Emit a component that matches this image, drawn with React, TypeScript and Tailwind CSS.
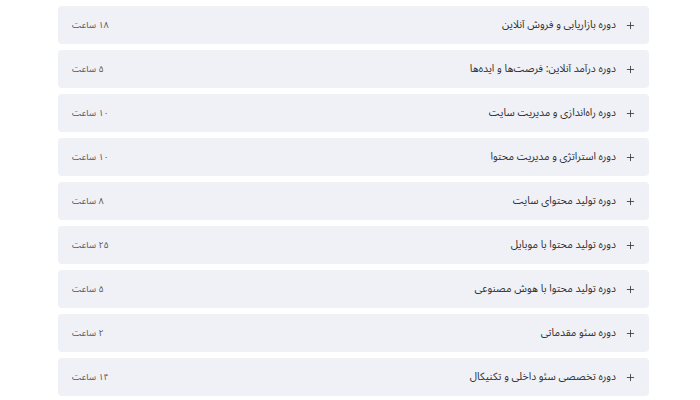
import { Plus } from 'lucide-react';

const courses = [
  { title: 'دوره بازاریابی و فروش آنلاین', hours: '۱۸ ساعت' },
  { title: 'دوره درآمد آنلاین: فرصت‌ها و ایده‌ها', hours: '۵ ساعت' },
  { title: 'دوره راه‌اندازی و مدیریت سایت', hours: '۱۰ ساعت' },
  { title: 'دوره استراتژی و مدیریت محتوا', hours: '۱۰ ساعت' },
  { title: 'دوره تولید محتوای سایت', hours: '۸ ساعت' },
  { title: 'دوره تولید محتوا با موبایل', hours: '۲۵ ساعت' },
  { title: 'دوره تولید محتوا با هوش مصنوعی', hours: '۵ ساعت' },
  { title: 'دوره سئو مقدماتی', hours: '۲ ساعت' },
  { title: 'دوره تخصصی سئو داخلی و تکنیکال', hours: '۱۴ ساعت' },
];

export default function App() {
  return (
    <div className="w-[700px] h-[400px] bg-white overflow-hidden font-['Noto_Sans_Arabic','DejaVu_Sans',sans-serif]">
      <div dir="rtl" className="ml-[58px] w-[591px] pt-[6px] flex flex-col gap-[6px]">
        {courses.map((c) => (
          <div
            key={c.title}
            className="h-[38px] rounded-[4px] bg-[#f0f1f6] flex items-center justify-between pr-[13px] pl-[14px]"
          >
            <div className="flex items-center gap-[9px]">
              <Plus size={11} strokeWidth={1.8} className="text-[#333]" />
              <span className="pt-[2px] text-[10.5px] text-[#2f2f2f]">{c.title}</span>
            </div>
            <span className="pt-[1px] text-[9px] text-[#555]">{c.hours}</span>
          </div>
        ))}
      </div>
    </div>
  );
}
